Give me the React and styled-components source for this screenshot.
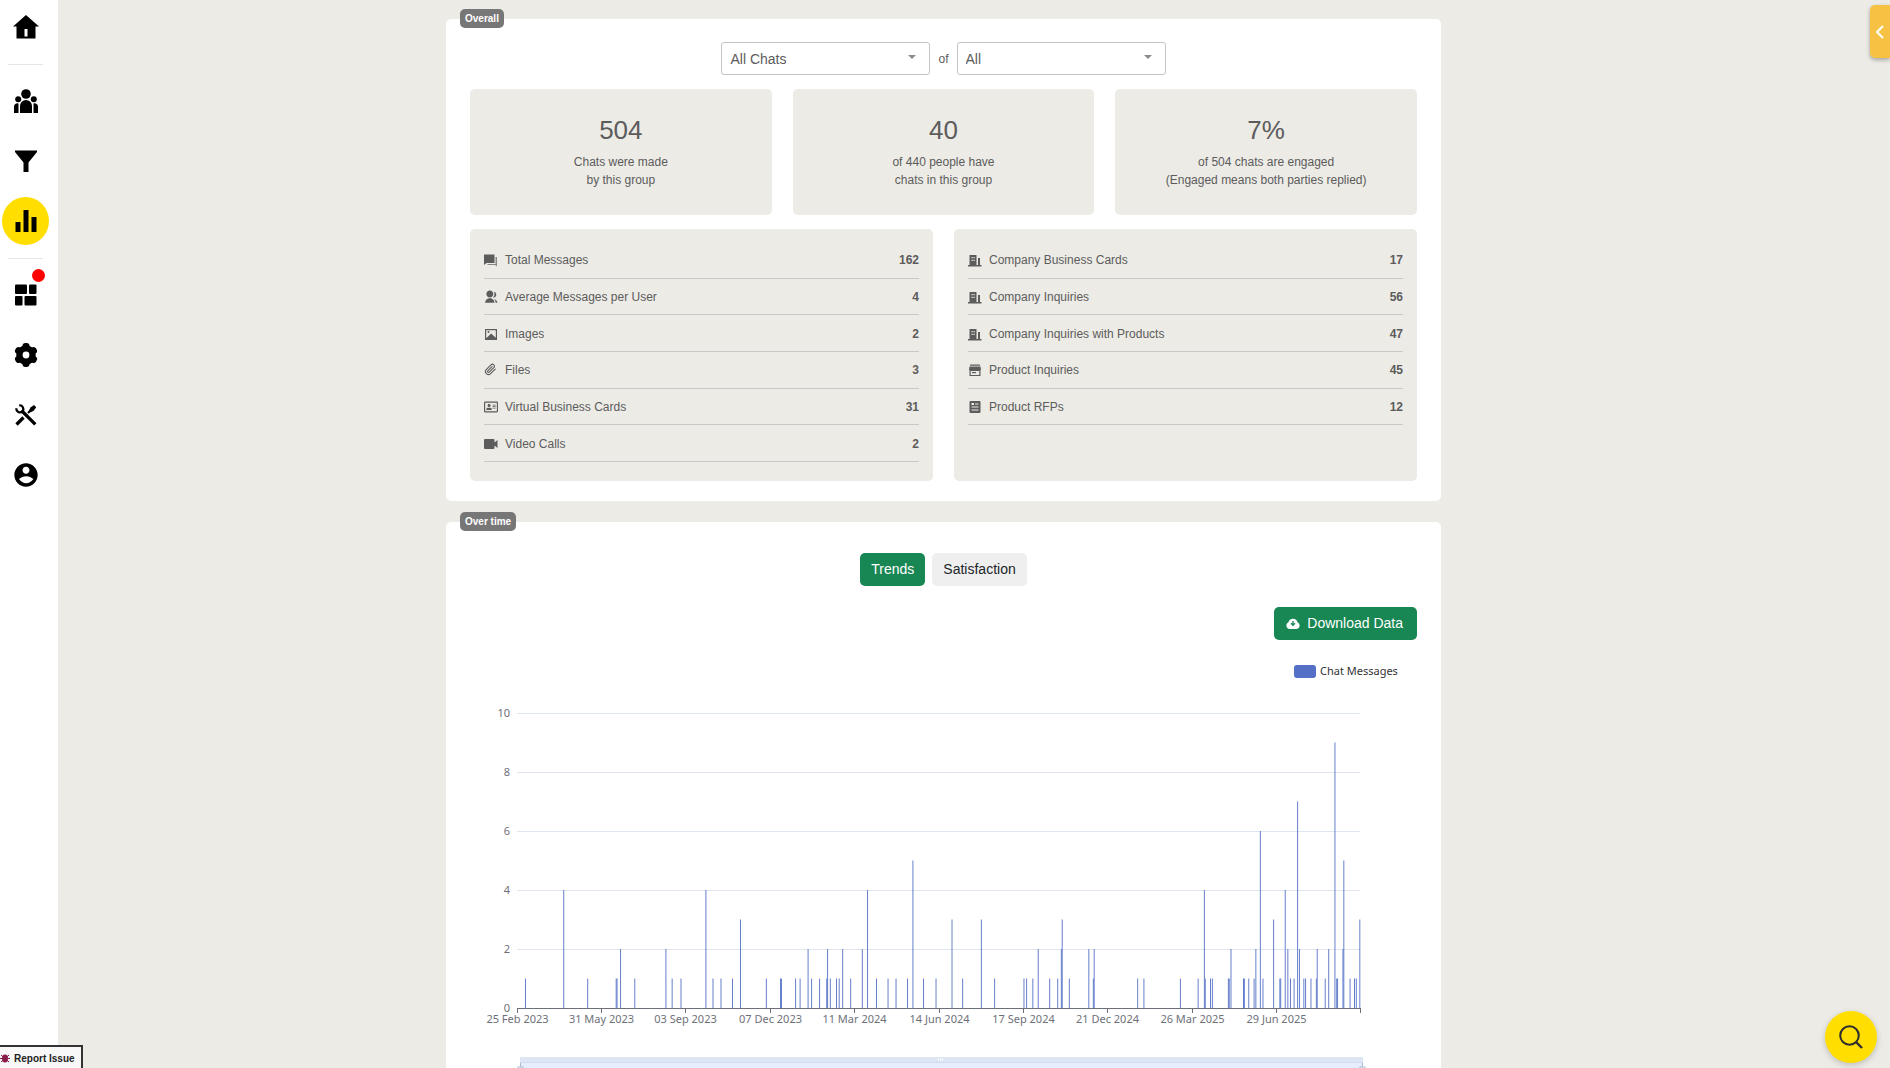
import React from 'react'
import styled, { createGlobalStyle } from 'styled-components'
import { FaRegAddressCard } from 'react-icons/fa'
import { RiAccountCircleFill, RiGroupFill } from 'react-icons/ri'

const stats = [
  { value: '504', lines: ['Chats were made', 'by this group'] },
  { value: '40', lines: ['of 440 people have', 'chats in this group'] },
  { value: '7%', lines: ['of 504 chats are engaged', '(Engaged means both parties replied)'] },
]

// [day since 25 Feb 2023, messages]
const messages = [
  [9, 1], [52, 4], [79, 1], [111, 1], [112, 1], [116, 2], [132, 1], [167, 2], [174, 1], [184, 1],
  [212, 4], [220, 1], [229, 1], [242, 1], [251, 3], [280, 1], [296, 1], [297, 1], [313, 1], [318, 1],
  [327, 2], [331, 1], [340, 1], [348, 1], [349, 2], [352, 1], [359, 1], [362, 1], [366, 2], [375, 1],
  [388, 2], [394, 4], [404, 1], [417, 1], [426, 1], [439, 1], [445, 5], [457, 1], [471, 1], [489, 3],
  [501, 1], [522, 3], [537, 1], [570, 1], [573, 1], [580, 1], [586, 2], [599, 1], [608, 1], [612, 2],
  [613, 3], [621, 1], [643, 2], [648, 1], [649, 2], [698, 1], [705, 1], [746, 1], [766, 1], [773, 4],
  [774, 1], [780, 1], [782, 1], [800, 1], [801, 1], [803, 2], [817, 1], [818, 1], [823, 1], [829, 1],
  [831, 2], [836, 6], [839, 1], [851, 3], [858, 1], [859, 1], [864, 4], [867, 2], [870, 1], [874, 1],
  [878, 7], [880, 2], [885, 1], [887, 1], [893, 1], [899, 1], [900, 2], [909, 1], [913, 2], [920, 9],
  [922, 1], [923, 1], [929, 2], [930, 5], [937, 1], [942, 1], [944, 1], [948, 3],
]

const dates = [
  '25 Feb 2023', '31 May 2023', '03 Sep 2023', '07 Dec 2023', '11 Mar 2024',
  '14 Jun 2024', '17 Sep 2024', '21 Dec 2024', '26 Mar 2025', '29 Jun 2025',
]

const HomeIcon = () => (
  <svg width="26" height="26" viewBox="0 0 26 26">
    <path fillRule="evenodd" d="M13 1 26 12.500H22.500V24.500H3.500V12.500H0ZM11.500 15V22.500H14.500V15Z" />
  </svg>
)

const PeopleIcon = () => (
  <svg width="24" height="24" viewBox="0 0 24 24">
    <circle cx="12" cy="5" r="4.800" />
    <circle cx="4.200" cy="10.200" r="3" />
    <circle cx="19.800" cy="10.200" r="3" />
    <path d="M6 24v-7a6 6 0 0 1 12 0v7zM0 24v-6a3.500 3.500 0 0 1 4.500-3.600V24zM24 24v-6a3.500 3.500 0 0 0-4.500-3.600V24z" />
  </svg>
)

const FunnelIcon = () => (
  <svg width="24" height="24" viewBox="0 0 24 24">
    <path d="M1 1.500h22v1.500l-8.500 10.500V23h-5V13.500L1 3z" />
  </svg>
)

const BarsIcon = () => (
  <svg width="24" height="24" viewBox="0 0 24 24">
    <path d="M1.500 13h5v10h-5zM9.500 1h5v22h-5zM17.500 8h5v15h-5z" />
  </svg>
)

const DashboardIcon = () => (
  <svg width="24" height="24" viewBox="0 0 24 24">
    <rect x="1" y="1.500" width="12" height="9.500" rx="1" />
    <rect x="15" y="1.500" width="7.500" height="9.500" rx="1" />
    <rect x="1" y="13" width="7.500" height="9.500" rx="1" />
    <rect x="10.500" y="13" width="12" height="9.500" rx="1" />
  </svg>
)

const GearIcon = () => (
  <svg width="24" height="24" viewBox="0 0 24 24">
    {[0, 60, 120].map((a) => (
      <rect key={a} x="8.500" y="0" width="7" height="24" rx="3" transform={`rotate(${a} 12 12)`} />
    ))}
    <circle cx="12" cy="12" r="9.800" />
    <circle cx="12" cy="12" r="3.400" fill="#fff" />
  </svg>
)

const ToolsIcon = () => (
  <svg width="24" height="24" viewBox="0 0 24 24" fill="none" stroke="currentColor">
    <path strokeWidth="3.200" d="m7.500 7.500 13.800 13.800M2.500 21.500l7-7" />
    <path strokeWidth="2.200" d="M5.200 2.500a3.500 3.500 0 0 1 3.300 5.700 3.500 3.500 0 0 1-6-3M14 10l3-3" />
    <path fill="currentColor" stroke="none" d="m15 7.500 1.500-3L20 2l2.200 2.200-2.500 3.600-3 1.500z" />
  </svg>
)

const ChatIcon = () => (
  <svg width="14" height="14" viewBox="0 0 14 14">
    <path d="M0 1.500h10.500V10H2.500L0 12z" />
    <path opacity="0.700" d="M11.500 4H13v9.500L11 12H3.500v-1h8z" />
  </svg>
)

const ImageIcon = () => (
  <svg width="14" height="14" viewBox="0 0 14 14">
    <path fillRule="evenodd" d="M1 2h12v11H1zM2.200 3.200v8l5-4.700 4.600 4.200V3.200z" />
    <circle cx="4.500" cy="5" r="1" />
  </svg>
)

const ClipIcon = () => (
  <svg viewBox="-1 -1 28 28" fill="none" stroke="currentColor" strokeWidth="2.200" strokeLinecap="round">
    <path d="m21.440 11.050-9.190 9.190a6 6 0 0 1-8.490-8.490l9.190-9.190a4 4 0 0 1 5.660 5.660l-9.200 9.190a2 2 0 0 1-2.830-2.830l8.490-8.480" />
  </svg>
)

const VideoIcon = () => (
  <svg width="14" height="14" viewBox="0 0 14 14">
    <path d="M1 2h8.500a1 1 0 0 1 1 1v2.500L13.500 3v8l-3-2.500V11a1 1 0 0 1-1 1H1a1 1 0 0 1-1-1V3a1 1 0 0 1 1-1z" />
  </svg>
)

const CompanyIcon = () => (
  <svg width="14" height="14" viewBox="0 0 14 14">
    <path fillRule="evenodd" d="M1.500 2h7v10H10V5h2v7h1.500v1.500H0V12h1.500zM3.500 4v1.200h1.200V4zM5.500 4v1.200h1.200V4zM3.500 6.800V8h1.200V6.800zM5.500 6.800V8h1.200V6.800z" />
  </svg>
)

const ProductIcon = () => (
  <svg width="14" height="14" viewBox="0 0 14 14">
    <path fillRule="evenodd" d="M2 1.500h10v1.200H2zM1.500 3.500h11L13 7h-.5v6h-11V7H1zM2.700 8v4h8.600V8z" />
    <path d="M4 9h4v1.200H4z" />
  </svg>
)

const DocumentIcon = () => (
  <svg width="14" height="14" viewBox="0 0 14 14">
    <path fillRule="evenodd" d="M2.500 1h9a1 1 0 0 1 1 1v10a1 1 0 0 1-1 1h-9a1 1 0 0 1-1-1V2a1 1 0 0 1 1-1zM3.500 3v2H6V3zM7 3.500v1h3.500v-1zM3.500 6.500v1h7v-1zM3.500 9.500v1h7v-1z" />
  </svg>
)

const messageRows = [
  { icon: ChatIcon, label: 'Total Messages', value: 162 },
  { icon: RiGroupFill, label: 'Average Messages per User', value: 4 },
  { icon: ImageIcon, label: 'Images', value: 2 },
  { icon: ClipIcon, label: 'Files', value: 3 },
  { icon: FaRegAddressCard, label: 'Virtual Business Cards', value: 31 },
  { icon: VideoIcon, label: 'Video Calls', value: 2 },
]

const companyRows = [
  { icon: CompanyIcon, label: 'Company Business Cards', value: 17 },
  { icon: CompanyIcon, label: 'Company Inquiries', value: 56 },
  { icon: CompanyIcon, label: 'Company Inquiries with Products', value: 47 },
  { icon: ProductIcon, label: 'Product Inquiries', value: 45 },
  { icon: DocumentIcon, label: 'Product RFPs', value: 12 },
]

function Dropdown({ label, children }) {
  return (
    <SelectWrap>
      <Select aria-label={label}>{children}</Select>
      <Caret viewBox="0 0 8 4"><path d="M0 0h8L4 4z" /></Caret>
    </SelectWrap>
  )
}

function Rows({ items }) {
  return (
    <List>
      {items.map(({ icon: Icon, label, value }) => (
        <Row key={label}>
          <Icon />
          <span>{label}</span>
          <strong>{value}</strong>
        </Row>
      ))}
    </List>
  )
}

function Chart() {
  const left = 47
  const width = 843
  const base = 368
  const step = 0.8885
  const unit = 29.5

  return (
    <ChartSvg viewBox="0 0 947 500" role="img" aria-label="Chat messages over time">
      <rect x="824" y="25" width="22" height="13" rx="3" fill="#5470c6" />
      <text x="850" y="35" fill="#333">Chat Messages</text>

      {[0, 2, 4, 6, 8, 10].map((n) => {
        const y = Math.round(base - n * unit) + 0.5
        return (
          <g key={n}>
            {n > 0 && <path d={`M${left} ${y}h${width}`} stroke="#e0e6f1" />}
            <text x={left - 7} y={y + 3} textAnchor="end">{n}</text>
          </g>
        )
      })}

      {messages.map(([day, n]) => (
        <rect
          key={day}
          x={left + (day + 0.1) * step}
          y={base - n * unit}
          width={step}
          height={n * unit}
          fill="#5470c6"
        />
      ))}

      <path d={`M${left} ${base + 0.5}h${width + 1}`} stroke="#6e7079" />
      {dates.map((date, i) => {
        const x = Math.floor(left + i * 95 * step) + 0.5
        return (
          <g key={date}>
            <path d={`M${x} ${base}v5`} stroke="#6e7079" />
            <text x={x} y={base + 15} textAnchor="middle">{date}</text>
          </g>
        )
      })}
      <path d={`M${left + width + 0.5} ${base}v5`} stroke="#6e7079" />

      <rect x="50" y="417" width="843" height="6" fill="#dfe6f3" />
      <rect x="50" y="423" width="843" height="30" fill="#e6edfd" />
      <path d="M50 422.500h843" stroke="#d2dbee" />
      <path d="M468 419.500h6" stroke="#fff" strokeWidth="2" strokeDasharray="1 1" />
      <path d="M50.500 423v30M892.500 423v30" stroke="#acb8d1" />
      <rect x="48" y="427" width="5" height="20" fill="#fff" stroke="#acb8d1" />
      <rect x="890" y="427" width="5" height="20" fill="#fff" stroke="#acb8d1" />
    </ChartSvg>
  )
}

function App() {
  return (
    <Page>
      <GlobalStyle />
      <Sidebar>
        <NavLink href="#home" aria-label="Home"><HomeIcon /></NavLink>
        <Divider />
        <NavLink href="#people" aria-label="People"><PeopleIcon /></NavLink>
        <NavLink href="#filter" aria-label="Filter"><FunnelIcon /></NavLink>
        <NavLink href="#stats" aria-label="Statistics" $active><BarsIcon /></NavLink>
        <Divider />
        <NavLink href="#boards" aria-label="Dashboard"><DashboardIcon /><Dot /></NavLink>
        <NavLink href="#settings" aria-label="Settings"><GearIcon /></NavLink>
        <NavLink href="#tools" aria-label="Tools"><ToolsIcon /></NavLink>
        <NavLink href="#account" aria-label="Account"><RiAccountCircleFill size={28} /></NavLink>
      </Sidebar>

      <Main>
        <Card>
          <Badge>Overall</Badge>
          <Filters>
            <Dropdown label="Chats"><option>All Chats</option></Dropdown>
            <span>of</span>
            <Dropdown label="Group"><option>All</option></Dropdown>
          </Filters>
          <StatGrid>
            {stats.map(({ value, lines }) => (
              <Stat key={value}>
                <h2>{value}</h2>
                {lines.map((line) => <p key={line}>{line}</p>)}
              </Stat>
            ))}
          </StatGrid>
          <ListGrid>
            <Rows items={messageRows} />
            <Rows items={companyRows} />
          </ListGrid>
        </Card>

        <Card>
          <Badge>Over time</Badge>
          <Tabs>
            <Button $primary>Trends</Button>
            <Button>Satisfaction</Button>
          </Tabs>
          <Actions>
            <DownloadButton $primary>
              <svg width="14" height="14" viewBox="0 0 14 14">
                <path fill="currentColor" d="M4 13a3.500 3.500 0 0 1-1.500-6.700 4.600 4.600 0 0 1 9 0A3.500 3.500 0 0 1 10 13z" />
                <path stroke="#198754" strokeWidth="1.300" fill="none" d="M7 5v4M5 7.300l2 2 2-2" />
              </svg>
              Download Data
            </DownloadButton>
          </Actions>
          <Chart />
        </Card>
      </Main>

      <Rail>
        <PanelToggle aria-label="Open panel">
          <svg width="8" height="14" viewBox="0 0 8 14" fill="none" stroke="#fff" strokeWidth="2">
            <path d="M7 1 1 7l6 6" />
          </svg>
        </PanelToggle>
      </Rail>

      <SearchButton aria-label="Search">
        <svg width="24" height="24" viewBox="0 0 24 24" fill="none" stroke="#2d2d2d" strokeWidth="2">
          <circle cx="10.500" cy="10.500" r="9.300" />
          <path strokeWidth="2.400" d="m17 17 6 6" />
        </svg>
      </SearchButton>

      <ReportButton>
        <svg width="10" height="10" viewBox="0 0 10 10">
          <path stroke="#8a1c4a" d="M1 2l8 7M1 9l8-7M0 5.500h10" />
          <ellipse cx="5" cy="5.500" rx="3" ry="4" fill="#8a1c4a" />
        </svg>
        Report Issue
      </ReportButton>
    </Page>
  )
}

export default App

const GlobalStyle = createGlobalStyle`
  * {
    box-sizing: border-box;
  }
  body {
    margin: 0;
    background: #ecebe6;
    color: #5c5c5c;
    font-family: "Liberation Sans", Arial, sans-serif;
    font-size: 12px;
  }
  button, select {
    font-family: inherit;
  }
  h2, p, ul {
    margin: 0;
    padding: 0;
  }
`

const Page = styled.div`
  display: grid;
  grid-template-columns: 58px minmax(0, 1fr) 61px;
  height: 100vh;
  overflow: hidden;
`

const Sidebar = styled.nav`
  display: flex;
  flex-direction: column;
  gap: 12px;
  padding: 3px 2px;
  background: #fff;
`

const NavLink = styled.a`
  position: relative;
  display: flex;
  align-items: center;
  justify-content: center;
  width: 47px;
  height: 48px;
  border-radius: 50%;
  color: #000;
  background: ${(props) => (props.$active ? '#ffde00' : 'transparent')};
`

const Dot = styled.span`
  position: absolute;
  top: -2px;
  right: 4px;
  width: 13px;
  height: 13px;
  border-radius: 50%;
  background: #f00;
`

const Divider = styled.div`
  width: 35px;
  height: 2px;
  margin-left: 6px;
  border-bottom: 1px solid #e6e5df;
`

const Main = styled.main`
  display: flex;
  flex-direction: column;
  align-items: center;
  gap: 21px;
  padding: 19px 0;
  overflow-y: auto;
  scrollbar-width: none;
`

const Card = styled.section`
  position: relative;
  flex-shrink: 0;
  width: 100%;
  max-width: 995px;
  padding: 23px 24px 20px;
  border-radius: 5px;
  background: #fff;
`

const Badge = styled.span`
  position: absolute;
  top: -10px;
  left: 14px;
  padding: 0 5px;
  border-radius: 5px;
  background: #777;
  color: #fff;
  font-size: 10px;
  font-weight: bold;
  line-height: 19px;
`

const Filters = styled.div`
  display: flex;
  align-items: center;
  justify-content: center;
  gap: 8px;
  margin-bottom: 14px;
`

const SelectWrap = styled.div`
  position: relative;
  width: 209px;
`

const Select = styled.select`
  display: block;
  width: 100%;
  height: 33px;
  padding: 0 8px;
  border: 1px solid #c4c4c4;
  border-radius: 3px;
  appearance: none;
  background: #fff;
  color: #5c5c5c;
  font-size: 14px;
`

const Caret = styled.svg`
  position: absolute;
  top: 13px;
  right: 14px;
  width: 8px;
  height: 4px;
  fill: #8c8c8c;
  pointer-events: none;
`

const StatGrid = styled.div`
  display: grid;
  grid-template-columns: repeat(3, 1fr);
  gap: 21px;
  margin-bottom: 14px;
`

const Stat = styled.div`
  padding: 25px 0 26px;
  border-radius: 5px;
  background: #ecebe6;
  text-align: center;
  line-height: 18px;

  h2 {
    margin-bottom: 7px;
    font-size: 26px;
    font-weight: normal;
    line-height: 32px;
  }
`

const ListGrid = styled.div`
  display: grid;
  grid-template-columns: repeat(2, 1fr);
  gap: 21px;
`

const List = styled.ul`
  display: grid;
  grid-template-rows: repeat(6, 1fr);
  height: 252px;
  padding: 13px 14px 19px;
  border-radius: 5px;
  background: #ecebe6;
  list-style: none;
`

const Row = styled.li`
  display: flex;
  align-items: center;
  gap: 7px;
  padding-top: 1px;
  border-bottom: 1px solid #c8c8c8;

  svg {
    width: 14px;
    height: 14px;
    fill: #5c5c5c;
  }
  svg[fill='none'] {
    fill: none;
  }
  strong {
    margin-left: auto;
  }
`

const Tabs = styled.div`
  display: flex;
  justify-content: center;
  gap: 7px;
  padding-top: 8px;
`

const Button = styled.button`
  height: 33px;
  padding: 0 11px 2px;
  border: 0;
  border-radius: 5px;
  background: ${(props) => (props.$primary ? '#198754' : '#efefef')};
  color: ${(props) => (props.$primary ? '#fff' : '#212529')};
  font-size: 14px;
`

const Actions = styled.div`
  display: flex;
  justify-content: flex-end;
  margin-top: 21px;
`

const DownloadButton = styled(Button)`
  display: flex;
  align-items: center;
  gap: 7px;
  padding: 0 14px 1px 12px;
`

const ChartSvg = styled.svg`
  display: block;
  width: 100%;

  text {
    fill: #6e7079;
    font-family: "Noto Sans", sans-serif;
    font-size: 11px;
  }
  text[fill] {
    fill: #333;
  }
`

const Rail = styled.aside`
  display: flex;
  align-items: flex-start;
  justify-content: flex-end;
  padding-top: 5px;
`

const PanelToggle = styled.button`
  display: flex;
  align-items: center;
  justify-content: center;
  width: 20px;
  height: 53px;
  padding: 0;
  border: 0;
  border-radius: 5px 0 0 5px;
  background: #f7c244;
  box-shadow: 0 2px 4px rgba(0, 0, 0, 0.3);
`

const SearchButton = styled.button`
  position: fixed;
  right: 13px;
  bottom: 5px;
  display: flex;
  align-items: center;
  justify-content: center;
  width: 52px;
  height: 52px;
  padding: 0;
  border: 0;
  border-radius: 50%;
  background: #ffde00;
  box-shadow: 0 2px 6px rgba(0, 0, 0, 0.2);
`

const ReportButton = styled.button`
  position: fixed;
  left: 0;
  bottom: 0;
  display: flex;
  align-items: center;
  gap: 4px;
  height: 23px;
  padding: 1px 6px 0 0;
  border: solid #333;
  border-width: 2px 2px 0 0;
  background: #f8f8f8;
  color: #222;
  font-size: 10px;
  font-weight: bold;
`
